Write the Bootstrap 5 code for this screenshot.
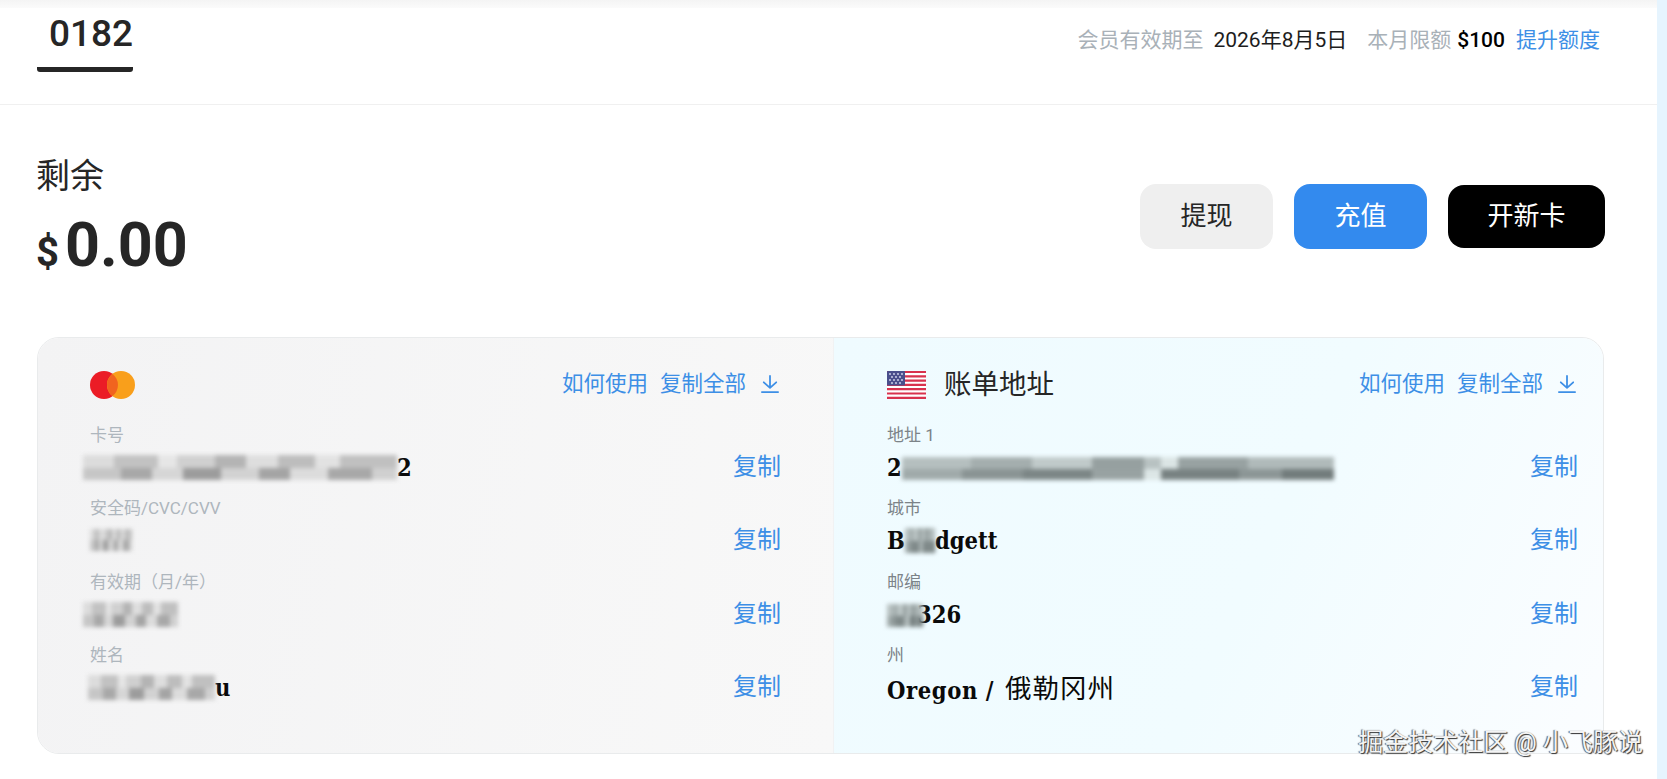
<!DOCTYPE html>
<html lang="zh-CN">
<head>
<meta charset="utf-8">
<title>Card</title>
<link rel="stylesheet" href="https://cdn.jsdelivr.net/npm/bootstrap@5.3.0/dist/css/bootstrap.min.css">
<style>
html,body{height:779px;overflow:hidden}
body{font-family:Roboto,"Noto Sans CJK SC",sans-serif;color:#262626;background:#fff}
.shell{height:779px;position:relative}
.page-main{flex:1 1 auto;min-width:0}
.side-strip{width:10px;flex:none;background:#e6f4fe}
.top-fade{height:8px;background:linear-gradient(#f4f4f4,#fbfbfb)}
.top-bar{height:97px;border-bottom:1px solid #f0f0f0;padding:0 57px 0 37px}
.tab-item{width:96px;height:64px;border-bottom:5px solid #262626;border-radius:0 0 3px 3px;font-size:37px;font-weight:500;line-height:38px;text-align:right;padding-top:7px}
.tab-wrap{align-self:flex-start}
.meta{font-size:21px;line-height:28px;margin-top:-32px;white-space:nowrap}
.meta-muted{color:#a9b1b8}
.meta-dark{color:#1d1d1d;margin-left:10px;margin-right:20px}
.meta-black{color:#000;margin-left:6px;margin-right:11px;font-weight:500}
.meta-link{color:#3d8fe6}
.balance-row{padding:51px 52px 0 36px;height:232px}
.bal-label{font-size:34px;line-height:40px}
.bal-amount{font-size:61px;font-weight:700;line-height:76px;margin-top:11px}
.bal-sym{font-size:40px;margin-right:6px}
.act-btn{font-size:26px;height:65px;border-radius:16px;border:0;display:flex;align-items:center;justify-content:center;padding:0}
.act-w{width:133px;background:#efefef;color:#262626}
.act-b{width:133px;background:#338aee;color:#fff}
.act-k{width:157px;height:63px;background:#000;color:#fff}
.act-gap{gap:21px;margin-top:28px}
.info-box{margin:0 53px 0 37px;height:417px;border:1px solid #e9ebec;border-radius:22px;overflow:hidden}
.pane{padding-top:27px;height:100%}
.pane-l{width:796px;flex:none;background:linear-gradient(100deg,#f3f3f4,#f8f8f8);padding-left:52px;padding-right:52px;border-right:1px solid #f1f2f3}
.pane-r{flex:1 1 auto;min-width:0;background:linear-gradient(115deg,#effbff,#f1fcff 55%,#fbfdff);padding-left:53px;padding-right:25px}
.pane-head{height:40px;margin-bottom:18px}
.head-links{font-size:21.5px;color:#3d8fe6;line-height:28px;gap:12px;margin-top:-2px}
.arrow-ic{width:18px;height:18px;margin-left:3px;margin-right:2px}
.pane-title{font-size:27.5px;line-height:36px;margin-left:18px;color:#262626}
.mc-ic{width:45px;height:28px;display:block}
.flag-ic{width:39px;height:28px;display:block}
.field{height:73.4px}
.field-label{font-size:17px;line-height:24px;color:#aeb6bd}
.pane-r .field-label{color:#7c8388}
.field-value{font-family:"DejaVu Serif Condensed","DejaVu Serif","Noto Sans CJK SC",serif;font-weight:700;font-size:23.5px;line-height:32px;color:#0a0a0a;white-space:nowrap;margin-top:5px;height:32px}
.val-wide{letter-spacing:.6px}
.cjk-val{font-family:"Noto Sans CJK SC",sans-serif;font-weight:400;font-size:26.5px;letter-spacing:1px;margin-left:3px;position:relative;top:-1px}
.copy-link{font-size:24px;line-height:32px;color:#3d8fe6;margin-top:28px}
.blot{display:inline-block;height:25px;vertical-align:-4px;filter:blur(2px);background-repeat:no-repeat;background-size:100% 52%;background-position:top,bottom}
.blot-light{background-image:linear-gradient(90deg,#dcdcdc 0 10%,#c2c2c2 10% 24%,#e6e6e6 24% 30%,#d0d0d0 30% 42%,#b4b4b4 42% 52%,#dedede 52% 62%,#bdbdbd 62% 74%,#e2e2e2 74% 82%,#c0c0c0 82% 100%),linear-gradient(90deg,#c6c6c6 0 12%,#a8a8a8 12% 22%,#d6d6d6 22% 32%,#9c9c9c 32% 44%,#d2d2d2 44% 56%,#a4a4a4 56% 66%,#dcdcdc 66% 78%,#a8a8a8 78% 92%,#d0d0d0 92% 100%)}
.blot-cool{background-image:linear-gradient(90deg,#b5bfbf 0 16%,#a4aeae 16% 30%,#c0caca 30% 44%,#96a0a0 44% 56%,#b8c2c2 56% 60%,#dbe5e5 60% 64%,#98a2a2 64% 80%,#b0baba 80% 100%),linear-gradient(90deg,#a0aaaa 0 14%,#8a9494 14% 28%,#7c8686 28% 44%,#98a2a2 44% 56%,#dce6e6 56% 60%,#788282 60% 78%,#8c9696 78% 88%,#727c7c 88% 100%)}
.b-card{width:314px;margin-left:-7px}
.b-cvc{width:42px;height:22px;vertical-align:-2px}
.b-exp{width:95px;margin-left:-7px}
.b-name{width:127px;margin-left:-2px}
.b-addr{width:432px;height:23px}
.b-city{width:30px}
.b-zip{width:36px;height:23px;margin-right:-6px}
.mark-text{position:absolute;right:24px;bottom:22px;font-size:25px;line-height:28px;color:#f4f4f4;text-shadow:1px 1px 1px #333,-1px 0 1px #555;white-space:nowrap}
</style>
</head>
<body>
<div class="shell d-flex">
  <main class="page-main">
    <div class="top-fade"></div>
    <header class="top-bar d-flex justify-content-between align-items-center">
      <div class="tab-wrap"><div class="tab-item">0182</div></div>
      <div class="meta d-flex">
        <span class="meta-muted">会员有效期至</span>
        <span class="meta-dark">2026年8月5日</span>
        <span class="meta-muted">本月限额</span>
        <span class="meta-black">$100</span>
        <a class="meta-link text-decoration-none" href="#">提升额度</a>
      </div>
    </header>
    <section class="balance-row d-flex justify-content-between">
      <div>
        <div class="bal-label">剩余</div>
        <div class="bal-amount"><span class="bal-sym">$</span>0.00</div>
      </div>
      <div class="d-flex align-items-center align-self-start act-gap">
        <button type="button" class="btn act-btn act-w">提现</button>
        <button type="button" class="btn act-btn act-b">充值</button>
        <button type="button" class="btn act-btn act-k">开新卡</button>
      </div>
    </section>
    <section class="info-box d-flex">
      <div class="pane pane-l">
        <div class="pane-head d-flex justify-content-between align-items-center">
          <svg class="mc-ic" viewBox="0 0 45 28"><circle cx="14" cy="14" r="14" fill="#eb1c26"/><circle cx="31" cy="14" r="14" fill="#f99f1b"/><path d="M22.5 2.9a14 14 0 0 1 0 22.2a14 14 0 0 1 0-22.2z" fill="#f1641f"/></svg>
          <div class="head-links d-flex align-items-center">
            <span>如何使用</span><span>复制全部</span>
            <svg class="arrow-ic" viewBox="0 0 18 18" fill="none" stroke="#3d8fe6" stroke-width="1.8" stroke-linecap="round" stroke-linejoin="round"><path d="M9 .9v11.600M2.800 7.300 9 12.800l6.200-5.500M.9 17.100h16.200"/></svg>
          </div>
        </div>
        <div class="field d-flex justify-content-between">
          <div><div class="field-label">卡号</div><div class="field-value"><span class="blot blot-light b-card"></span>2</div></div>
          <a class="copy-link text-decoration-none" href="#">复制</a>
        </div>
        <div class="field d-flex justify-content-between">
          <div><div class="field-label">安全码/CVC/CVV</div><div class="field-value"><span class="blot blot-light b-cvc"></span></div></div>
          <a class="copy-link text-decoration-none" href="#">复制</a>
        </div>
        <div class="field d-flex justify-content-between">
          <div><div class="field-label">有效期（月/年）</div><div class="field-value"><span class="blot blot-light b-exp"></span></div></div>
          <a class="copy-link text-decoration-none" href="#">复制</a>
        </div>
        <div class="field d-flex justify-content-between">
          <div><div class="field-label">姓名</div><div class="field-value"><span class="blot blot-light b-name"></span>u</div></div>
          <a class="copy-link text-decoration-none" href="#">复制</a>
        </div>
      </div>
      <div class="pane pane-r">
        <div class="pane-head d-flex justify-content-between align-items-center">
          <div class="d-flex align-items-center">
            <svg class="flag-ic" viewBox="0 0 39 28">
              <rect width="39" height="28" rx="2" fill="#fff"/>
              <path d="M0 1h39M0 5.300h39M0 9.600h39M0 13.900h39M0 18.200h39M0 22.500h39M0 26.800h39" stroke="#d8324e" stroke-width="2.200"/>
              <rect width="18" height="14.500" rx="1" fill="#4a4f8c"/>
              <g fill="#d9dcf0"><circle cx="3" cy="3" r=".9"/><circle cx="7" cy="3" r=".9"/><circle cx="11" cy="3" r=".9"/><circle cx="15" cy="3" r=".9"/><circle cx="5" cy="6" r=".9"/><circle cx="9" cy="6" r=".9"/><circle cx="13" cy="6" r=".9"/><circle cx="3" cy="9" r=".9"/><circle cx="7" cy="9" r=".9"/><circle cx="11" cy="9" r=".9"/><circle cx="15" cy="9" r=".9"/><circle cx="5" cy="12" r=".9"/><circle cx="9" cy="12" r=".9"/><circle cx="13" cy="12" r=".9"/></g>
            </svg>
            <span class="pane-title">账单地址</span>
          </div>
          <div class="head-links d-flex align-items-center">
            <span>如何使用</span><span>复制全部</span>
            <svg class="arrow-ic" viewBox="0 0 18 18" fill="none" stroke="#3d8fe6" stroke-width="1.8" stroke-linecap="round" stroke-linejoin="round"><path d="M9 .9v11.600M2.800 7.300 9 12.800l6.200-5.500M.9 17.100h16.200"/></svg>
          </div>
        </div>
        <div class="field d-flex justify-content-between">
          <div><div class="field-label">地址 1</div><div class="field-value">2<span class="blot blot-cool b-addr"></span></div></div>
          <a class="copy-link text-decoration-none" href="#">复制</a>
        </div>
        <div class="field d-flex justify-content-between">
          <div><div class="field-label">城市</div><div class="field-value">B<span class="blot blot-cool b-city"></span>dgett</div></div>
          <a class="copy-link text-decoration-none" href="#">复制</a>
        </div>
        <div class="field d-flex justify-content-between">
          <div><div class="field-label">邮编</div><div class="field-value"><span class="blot blot-cool b-zip"></span>326</div></div>
          <a class="copy-link text-decoration-none" href="#">复制</a>
        </div>
        <div class="field d-flex justify-content-between">
          <div><div class="field-label">州</div><div class="field-value val-wide">Oregon / <span class="cjk-val">俄勒冈州</span></div></div>
          <a class="copy-link text-decoration-none" href="#">复制</a>
        </div>
      </div>
    </section>
  </main>
  <aside class="side-strip"></aside>
  <div class="mark-text">掘金技术社区 @ 小飞豚说</div>
</div>
<script src="https://cdn.jsdelivr.net/npm/bootstrap@5.3.0/dist/js/bootstrap.bundle.min.js"></script>
</body>
</html>
